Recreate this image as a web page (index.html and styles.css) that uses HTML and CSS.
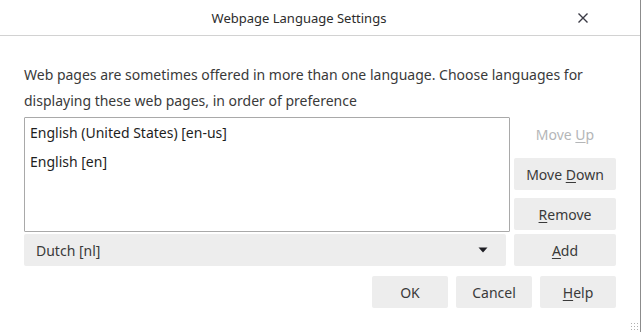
FILE: index.html
```html
<!DOCTYPE html>
<html lang="en">
<head>
<meta charset="utf-8">
<title>Webpage Language Settings</title>
<link rel="stylesheet" href="styles.css">
</head>
<body>
<div class="dialog">
  <div class="titlebar">
    <div class="title">Webpage Language Settings</div>
    <div class="close" aria-label="Close">
      <svg width="12" height="12" viewBox="0 0 12 12"><path d="M1.5 1.5 L10.5 10.5 M10.5 1.5 L1.5 10.5" stroke="#3a3a45" stroke-width="1.4" fill="none"/></svg>
    </div>
  </div>
  <div class="content">
    <p class="desc">Web pages are sometimes offered in more than one language. Choose languages for displaying these web pages, in order of preference</p>
    <div class="row">
      <div class="listbox">
        <div class="item">English (United States) [en-us]</div>
        <div class="item">English [en]</div>
      </div>
      <div class="side">
        <div class="btn disabled"><span>Move <u>U</u>p</span></div>
        <div class="btn"><span>Move <u>D</u>own</span></div>
        <div class="btn"><span><u>R</u>emove</span></div>
      </div>
    </div>
    <div class="row row-add">
      <div class="select">
        <span>Dutch [nl]</span>
        <svg class="arrow" width="10" height="6" viewBox="0 0 10 6"><path d="M0.5 0.5 H9.5 L5 5.5 Z" fill="#1e1e24"/></svg>
      </div>
      <div class="btn side-btn"><span><u>A</u>dd</span></div>
    </div>
    <div class="footer">
      <div class="btn foot-btn"><span>OK</span></div>
      <div class="btn foot-btn"><span>Cancel</span></div>
      <div class="btn foot-btn"><span><u>H</u>elp</span></div>
    </div>
  </div>
  <div class="grip"></div>
</div>
</body>
</html>
```
FILE: styles.css
```css
* { box-sizing: border-box; }
html, body { margin: 0; padding: 0; background: #fff; }
body {
  width: 641px;
  height: 332px;
  overflow: hidden;
  font-family: "Noto Sans", "Open Sans", sans-serif;
  color: #3a3a3a;
}
.dialog {
  position: relative;
  width: 641px;
  height: 332px;
  border-right: 1px solid #8c8c8c;
}
.titlebar {
  display: flex;
  align-items: center;
  height: 36px;
  border-bottom: 1px solid #d2d2d2;
}
.title {
  flex: 1;
  text-align: center;
  padding-left: 27px;
  font-size: 13px;
  color: #2c2c2c;
}
.close {
  width: 24px;
  height: 24px;
  display: flex;
  align-items: center;
  justify-content: center;
  margin-right: 45px;
}
.content {
  padding: 0 24px;
}
.desc {
  margin: 26px 0 3px;
  font-size: 14px;
  line-height: 26px;
  width: 592px;
}
.row {
  display: flex;
  gap: 4px;
}
.listbox {
  width: 486px;
  height: 115px;
  border: 1px solid #a9a9a9;
  border-radius: 1px;
  padding-top: 1px;
}
.item {
  height: 28.5px;
  line-height: 28px;
  padding-left: 5px;
  font-size: 14px;
  color: #1e1e1e;
}
.side {
  display: flex;
  flex-direction: column;
  gap: 8px;
  padding-top: 1px;
}
.btn {
  width: 102px;
  height: 32px;
  display: flex;
  align-items: center;
  justify-content: center;
  background: #ededed;
  border-radius: 2px;
  font-size: 14px;
  color: #3a3a3a;
}
.btn u { text-underline-offset: 2px; }
.btn.disabled {
  background: transparent;
  color: #b4b6b8;
}
.row-add {
  margin-top: 2px;
  gap: 8px;
}
.select {
  width: 482px;
  height: 32px;
  background: #ededed;
  border-radius: 2px;
  display: flex;
  align-items: center;
  justify-content: space-between;
  padding: 0 18px 0 12px;
  font-size: 14px;
  color: #3a3a3a;
}
.arrow { display: block; }
.footer {
  display: flex;
  justify-content: flex-end;
  gap: 8px;
  margin-top: 10px;
  width: 592px;
}
.foot-btn { width: 76px; }
.grip {
  position: absolute;
  right: 2px;
  bottom: 2px;
  width: 8px;
  height: 8px;
  background-image: radial-gradient(circle, #b0b0b0 0.8px, transparent 1px);
  background-size: 3px 3px;
}
```
